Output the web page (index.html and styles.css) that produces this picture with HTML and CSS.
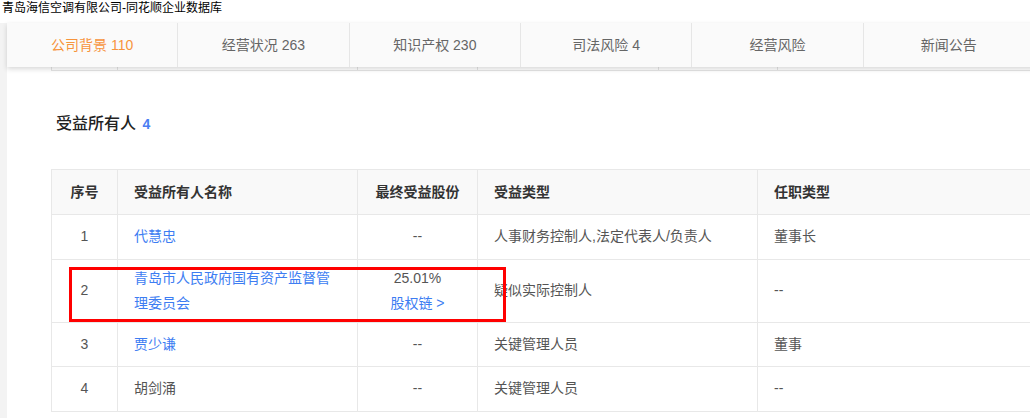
FILE: index.html
```html
<!DOCTYPE html>
<html lang="zh-CN">
<head>
<meta charset="utf-8">
<title>青岛海信空调有限公司-同花顺企业数据库</title>
<link rel="stylesheet" href="styles.css">
</head>
<body>
<div class="doc-title">青岛海信空调有限公司-同花顺企业数据库</div>
<div class="page">
  <div class="gutter"></div>
  <div class="main">
    <nav class="tabs">
      <div class="tab active">公司背景 110</div>
      <div class="tab">经营状况 263</div>
      <div class="tab">知识产权 230</div>
      <div class="tab">司法风险 4</div>
      <div class="tab">经营风险</div>
      <div class="tab">新闻公告</div>
    </nav>
    <div class="prev-tail">
      <span class="stub w66"></span><span class="stub w240"></span><span class="stub w120"></span><span class="stub w181"></span><span class="stub w119"></span><span class="stub wrest"></span>
    </div>
    <h2 class="section-title">受益所有人 <span class="count">4</span></h2>
    <table class="grid">
      <colgroup>
        <col class="c1"><col class="c2"><col class="c3"><col class="c4"><col class="c5">
      </colgroup>
      <thead>
        <tr>
          <th class="center">序号</th>
          <th>受益所有人名称</th>
          <th class="center">最终受益股份</th>
          <th>受益类型</th>
          <th>任职类型</th>
        </tr>
      </thead>
      <tbody>
        <tr>
          <td class="center">1</td>
          <td><a class="link">代慧忠</a></td>
          <td class="center">--</td>
          <td>人事财务控制人,法定代表人/负责人</td>
          <td>董事长</td>
        </tr>
        <tr>
          <td class="center">2</td>
          <td><a class="link">青岛市人民政府国有资产监督管理委员会</a></td>
          <td class="center">25.01%<br><a class="link">股权链 &gt;</a></td>
          <td>疑似实际控制人</td>
          <td>--</td>
        </tr>
        <tr>
          <td class="center">3</td>
          <td><a class="link">贾少谦</a></td>
          <td class="center">--</td>
          <td>关键管理人员</td>
          <td>董事</td>
        </tr>
        <tr>
          <td class="center">4</td>
          <td>胡剑涌</td>
          <td class="center">--</td>
          <td>关键管理人员</td>
          <td>--</td>
        </tr>
      </tbody>
    </table>
    <div class="highlight"></div>
  </div>
</div>
</body>
</html>
```

FILE: styles.css
```css
html, body {
  margin: 0;
  padding: 0;
  background: #fff;
  overflow: hidden;
  width: 1030px;
  height: 418px;
}
body {
  font-family: "Liberation Sans", "Noto Sans CJK SC", sans-serif;
  color: #555;
}
.doc-title {
  height: 23px;
  font-size: 12px;
  line-height: 16px;
  padding-left: 2px;
  color: #000;
  white-space: nowrap;
}
.page {
  display: flex;
  height: 395px;
}
.gutter {
  width: 7px;
  flex: none;
  background: #f3f3f3;
}
.main {
  flex: 1;
  position: relative;
  background: #fff;
  min-width: 0;
}
.tabs {
  position: relative;
  z-index: 2;
  display: flex;
  width: 1028px;
  height: 44px;
  background: #fafafa;
  box-shadow: 0 2px 5px rgba(0, 0, 0, 0.16);
}
.tab {
  flex: none;
  width: 171.33px;
  box-sizing: border-box;
  border-right: 1px solid #e6e6e6;
  font-size: 14px;
  line-height: 44px;
  text-align: center;
  color: #666;
  white-space: nowrap;
}
.tab.active {
  color: #f7943c;
}
.prev-tail {
  display: flex;
  margin-left: 44px;
  height: 3px;
  border-bottom: 1px solid #e4e4e4;
}
.stub {
  display: block;
  flex: none;
  border-left: 1px solid #e4e4e4;
  box-sizing: border-box;
}
.w66 { width: 66px; }
.w240 { width: 240px; }
.w120 { width: 120px; }
.w181 { width: 181px; }
.w119 { width: 119px; }
.wrest { width: 300px; }
.section-title {
  margin: 41px 0 0 49px;
  font-size: 16px;
  line-height: 24px;
  font-weight: 500;
  color: #222;
}
.section-title .count {
  font-size: 14px;
  font-weight: bold;
  color: #4a7ef3;
  margin-left: 2px;
}
.grid {
  margin: 33px 0 0 44px;
  border-collapse: collapse;
  table-layout: fixed;
  width: 986px;
  font-size: 14px;
}
.c1 { width: 66px; }
.c2 { width: 240px; }
.c3 { width: 120px; }
.c4 { width: 280px; }
.c5 { width: 280px; }
.grid th, .grid td {
  border: 1px solid #e8e8e8;
  padding: 6px 16px;
  line-height: 25px;
  text-align: left;
  vertical-align: middle;
}
.grid th {
  height: 32px;
  background: #f9f9f9;
  color: #333;
  font-weight: bold;
}
.grid td {
  height: 31.6px;
  color: #555;
}
.grid .center {
  text-align: center;
}
.link {
  color: #3d7df2;
  text-decoration: none;
}
.highlight {
  position: absolute;
  left: 62px;
  top: 244px;
  width: 437px;
  height: 55px;
  box-sizing: border-box;
  border: 3px solid #f00;
  pointer-events: none;
}
```
